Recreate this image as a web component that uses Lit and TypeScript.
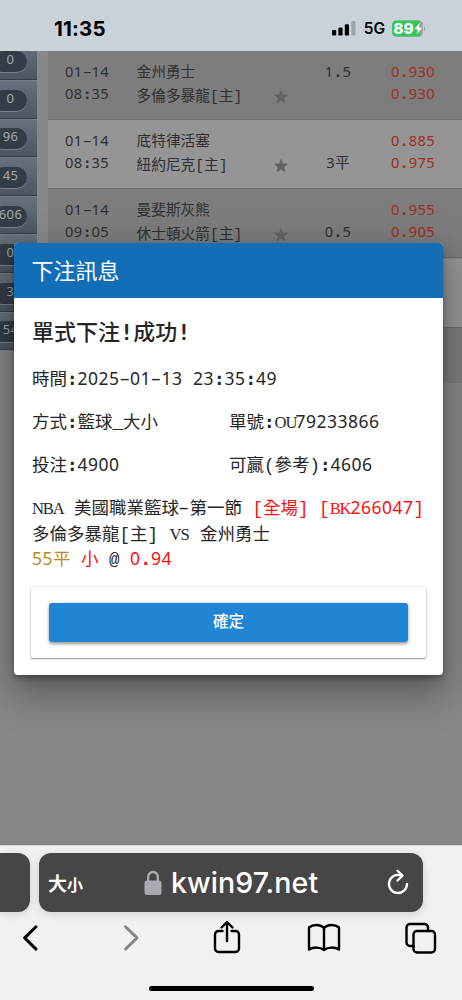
import { LitElement, html, svg, css } from "lit";
import { customElement, property } from "lit/decorators.js";

/** Sets a string on a fixed 0.6em grid, with a suitable face for each kind of character. */
const mono = (text: string) =>
  (text.match(/[0-9]+|[A-Z]+|[:.!]+|-|[^0-9A-Z:.!\-]+/g) ?? []).map((run) => {
    if (/[0-9]/.test(run)) return html`<span class="d">${run}</span>`;
    if (/[A-Z]/.test(run)) return html`<span class="c" style="width:${run.length * 0.6}em"><span>${run}</span></span>`;
    if (run === "-") return html`<span class="h">-</span>`;
    if (/^[:.!]/.test(run)) return html`<span class="p">${run}</span>`;
    return run;
  });

const gridText = css`
  .m { font-family: "Liberation Mono", "Noto Sans CJK TC", monospace; white-space: pre; }
  .d { font-family: "Noto Sans", sans-serif; letter-spacing: 0.028em; line-height: 1; }
  .p { font-family: "DejaVu Sans Mono", monospace; font-weight: 700; line-height: 1; }
  .h { font-family: "Noto Sans", sans-serif; display: inline-block; width: 0.322em; margin: 0 0.139em; transform: scaleX(1.85); line-height: 1; }
  .c { display: inline-block; text-align: center; line-height: 1; }
  .c span { font-family: "Liberation Serif", serif; font-size: 0.95em; letter-spacing: -0.07em; }
`;

@customElement("status-bar")
class StatusBar extends LitElement {
  static styles = css`
    :host { display: flex; height: 51px; box-sizing: border-box; background: #cad1d9; color: #000;
      font-family: Inter, sans-serif; align-items: center; padding: 5px 36px 0 54px; }
    .time { font-size: 20.5px; font-weight: 700; flex: 1; letter-spacing: 0.2px; }
    .sig { margin-right: 8px; }
    .net { font-size: 15.5px; font-weight: 600; margin-right: 7px; }
    svg { display: block; }
    text { font: 800 15px Inter, sans-serif; }
  `;
  render() {
    return html`
      <span class="time">11:35</span>
      <svg class="sig" width="24" height="15" viewBox="0 0 24 15">
        <rect x="0" y="9" width="4.2" height="5.5" rx="1.2" />
        <rect x="6.4" y="6.5" width="4.2" height="8" rx="1.2" />
        <rect x="12.8" y="3.2" width="4.2" height="11.3" rx="1.2" />
        <rect x="19.3" y="0" width="4.2" height="14.5" rx="1.2" fill="#9ea4ab" />
      </svg>
      <span class="net">5G</span>
      <svg width="34" height="17" viewBox="0 0 34 17">
        <rect x="0" y="0.5" width="31" height="16" rx="4.5" fill="#9ca3a9" />
        <path d="M4.500.5H28v16H4.500A4.500 4.500 0 0 1 0 12V5A4.500 4.500 0 0 1 4.500.5Z" fill="#34c759" />
        <path d="M32 6v5.200c1.600-.8 1.600-4.400 0-5.200Z" fill="#9ca3a9" />
        <text x="1.300" y="13.900" fill="#fff" textLength="20.500" lengthAdjust="spacingAndGlyphs">89</text>
        <path d="M27.800 2.500 22.500 9.300h3.300l-1 5.200 5.300-7h-3.300Z" fill="#fff" />
      </svg>`;
  }
}

@customElement("side-menu")
class SideMenu extends LitElement {
  static styles = [gridText, css`
    :host { display: block; width: 37px; height: 299px; overflow: hidden; }
    .list { margin-top: -9.6px; }
    .item { height: 38.62px; box-sizing: border-box; border-bottom: 1.5px solid #343e48; border-top: 1px solid #747d86;
      background: linear-gradient(#68717b, #4c5660); display: flex; align-items: center; justify-content: flex-end; padding: 2px 10px 0 0; }
    .pill { width: 34px; height: 21px; flex: none; border-radius: 11px; background: #323d48; box-shadow: 0 1px 0 #77818a;
      box-sizing: border-box; color: #a5a9ac; font-size: 13px; line-height: 20px; text-align: center; padding-left: 1px; }
  `];
  render() {
    return html`<div class="list">${["0", "0", "96", "45", "606", "0", "3", "54"].map(
      (n) => html`<div class="item"><div class="pill m">${mono(n)}</div></div>`
    )}</div>`;
  }
}

interface Game { date: string; time: string; away: string; home: string; top: string; bottom: string; odds: string[]; }

const games: Game[] = [
  { date: "01-14", time: "08:35", away: "金州勇士", home: "多倫多暴龍[主]", top: "1.5", bottom: "", odds: ["0.930", "0.930"] },
  { date: "01-14", time: "08:35", away: "底特律活塞", home: "紐約尼克[主]", top: "", bottom: "3平", odds: ["0.885", "0.975"] },
  { date: "01-14", time: "09:05", away: "曼斐斯灰熊", home: "休士頓火箭[主]", top: "", bottom: "0.5", odds: ["0.955", "0.905"] },
];

@customElement("game-list")
class GameList extends LitElement {
  static styles = [gridText, css`
    :host { display: block; flex: 1; }
    .row { height: 69px; box-sizing: border-box; border-bottom: 1px solid #6d6d6d; background: #7d7d7d; color: #303030;
      font-size: 14.7px; display: grid; grid-template-columns: 71.5px 136.5px 30px 70px 1fr; padding: 11px 0 0 17px; margin-bottom: 0.2px; }
    .row:nth-child(even) { background: #959595; }
    .row:last-child { height: 55px; border-bottom: 0; }
    .l { height: 22px; line-height: 22px; }
    .team .l { height: 23.5px; line-height: 23.5px; }
    .star { padding-top: 27px; }
    .star svg { display: block; }
    .mid { text-align: center; }
    .odds { color: #a12d20; padding-left: 18px; }
  `];
  render() {
    return html`${games.map((g) => html`<div class="row m"><div><div class="l">${mono(g.date)}</div><div class="l">${mono(g.time)}</div></div><div class="team"><div class="l">${mono(g.away)}</div><div class="l">${mono(g.home)}</div></div><div class="star"><svg width="16" height="15" viewBox="0 0 16 15"><path d="M8 .5 9.900 5.600l5.400.2-4.200 3.400 1.500 5.300L8 11.500l-4.600 3 1.500-5.300L.7 5.800l5.400-.2Z" fill="#636363" /></svg></div><div class="mid"><div class="l">${mono(g.top)}</div><div class="l">${mono(g.bottom)}</div></div><div class="odds">${g.odds.map((o) => html`<div class="l">${mono(o)}</div>`)}</div></div>`)}
      <div class="row"></div><div class="row"></div>`;
  }
}

@customElement("bet-dialog")
class BetDialog extends LitElement {
  @property() heading = "下注訊息";
  static styles = [gridText, css`
    :host { display: block; width: 429px; height: 432px; box-sizing: border-box; background: #fff; border-radius: 4px; overflow: hidden;
      color: #262626; box-shadow: 0 11px 15px -7px rgba(0,0,0,.2), 0 24px 38px 3px rgba(0,0,0,.14), 0 9px 36px 8px rgba(0,0,0,.16), 0 3px 5px rgba(0,0,0,.25); }
    .head { height: 55px; line-height: 61px; padding-left: 17.5px; background: #126eb6; color: #fff; font-size: 22px; box-sizing: border-box; }
    .body { padding: 20px 17px 0 18px; font-size: 17.5px; }
    .title { font-size: 22px; font-weight: 500; height: 34px; line-height: 34px; margin-bottom: 15px; }
    .line { display: grid; grid-template-columns: 197px 1fr; height: 26px; line-height: 26px; margin-bottom: 17px; }
    .one { display: block; }
    .t { height: 25.6px; line-height: 26.6px; }
    .red { color: #fb1010; }
    .gold { color: #b8891b; }
    .card { margin: 14px 0 0 -1px; height: 71px; box-sizing: border-box; padding: 16px 18px; border-radius: 2px;
      box-shadow: 0 1px 2px rgba(0,0,0,.4), 0 0 2px rgba(0,0,0,.2); }
    .btn { display: block; width: 100%; height: 39px; border: 0; border-radius: 3px; background: #2185d5; color: #fff; padding: 0 0 4px;
      font: 500 15.500px "Noto Sans CJK TC", sans-serif; box-shadow: 0 2px 3px rgba(0,0,0,.3), 0 1px 5px rgba(0,0,0,.16); }
  `];
  render() {
    return html`
      <div class="head m">${this.heading}</div>
      <div class="body m"><div class="title">${mono("單式下注!成功!")}</div><div class="line one">${mono("時間:2025-01-13 23:35:49")}</div><div class="line"><div>${mono("方式:籃球_大小")}</div><div>${mono("單號:OU79233866")}</div></div><div class="line"><div>${mono("投注:4900")}</div><div>${mono("可贏(參考):4606")}</div></div><div class="t">${mono("NBA 美國職業籃球-第一節 ")}<span class="red">${mono("[全場] [BK266047]")}</span></div><div class="t">${mono("多倫多暴龍[主] VS 金州勇士")}</div><div class="t"><span class="gold">${mono("55平")}</span> <span class="red">小</span> @ <span class="red">${mono("0.94")}</span></div><div class="card"><button class="btn">確定</button></div></div>`;
  }
}

interface Tool { name: string; width: number; shape: unknown; }

const tools: Tool[] = [
  { name: "back", width: 16, shape: svg`<path d="M13 6.700 1.700 17.900 13 29.100" stroke-width="2.900" />` },
  { name: "forward", width: 18, shape: svg`<path d="M2.500 6.700 14 17.900 2.500 29.100" stroke-width="2.900" stroke="#858585" />` },
  { name: "share", width: 28, shape: svg`<path d="M9.500 11H5.500a3.500 3.500 0 0 0-3.500 3.500v14a3.500 3.500 0 0 0 3.500 3.500h17a3.500 3.500 0 0 0 3.500-3.500v-14a3.500 3.500 0 0 0-3.500-3.500h-4M14 21V2.500M8.500 7.500 14 2l5.500 5.500" />` },
  { name: "bookmarks", width: 34, shape: svg`<path d="M17 8v22M17 8C13.500 4 6 4 2 7.500V29.500c4-2.500 11-2.800 15 .5 4-3.300 11-3 15-.5V7.500C28 4 20.500 4 17 8Z" />` },
  { name: "tabs", width: 34, shape: svg`<path d="M9.500 26H6a3.500 3.500 0 0 1-3.500-3.500V7.500A3.500 3.500 0 0 1 6 4h14.500A3.500 3.500 0 0 1 24 7.500V11" /><rect x="9.500" y="11" width="21.500" height="21.500" rx="3.500" />` },
];

@customElement("tool-row")
class ToolRow extends LitElement {
  static styles = css`
    :host { display: grid; grid-template-columns: 100px 90px 94px 97px 34px; padding: 8px 0 0 23px; height: 47px; box-sizing: border-box; }
    svg { display: block; fill: none; stroke: #000; stroke-width: 2.400; stroke-linecap: round; stroke-linejoin: round; }
  `;
  render() {
    return tools.map((t) => html`<svg width=${t.width} height="36" viewBox="0 0 ${t.width} 36" role="img">${t.shape}</svg>`);
  }
}

@customElement("browser-bar")
class BrowserBar extends LitElement {
  static styles = css`
    :host { display: block; height: 155px; box-sizing: border-box; background: #f1f1f1; border-top: 1px solid #d5d5d5; overflow: hidden; }
    svg { display: block; fill: none; stroke-width: 2; stroke-linecap: round; stroke-linejoin: round; }
    .tabs { display: flex; gap: 9px; padding-top: 7px; }
    .prev { width: 30px; height: 59px; border-radius: 0 12px 12px 0; background: #464646; box-shadow: 0 2px 8px rgba(0,0,0,.14); }
    .addr { width: 384px; height: 59px; border-radius: 12px; background: #464646; color: #fff; box-sizing: border-box; display: grid;
      grid-template-columns: 96px 1fr 37px; align-items: center; padding-left: 9px; box-shadow: 0 2px 8px rgba(0,0,0,.14); }
    .aa { font: 700 19px "Noto Sans CJK TC", sans-serif; white-space: nowrap; }
    .small { font-size: 16px; }
    .host { display: flex; align-items: center; gap: 9px; font: 550 28.500px Inter, sans-serif; letter-spacing: 0.1px; }
    .lock { fill: #aaa9b1; }
    .home { width: 165px; height: 5px; border-radius: 3px; background: #000; margin: 27px auto 0; }
  `;
  render() {
    return html`
      <div class="tabs">
        <div class="prev"></div>
        <div class="addr">
          <span class="aa">大<span class="small">小</span></span>
          <span class="host"><svg class="lock" width="18" height="26" viewBox="0 0 18 26"><path d="M4.200 11V6.800a4.800 4.800 0 0 1 9.600 0V11" fill="none" stroke="#aaa9b1" stroke-width="2.400" /><rect x=".5" y="10.500" width="17" height="14.500" rx="2.500" /></svg>kwin97.net</span>
          <svg width="24" height="28" viewBox="0 0 24 28"><path stroke="#fff" stroke-width="2.300" d="M15 6.500A9 9 0 1 0 21 14.800M11.500 1.700l5 4.900-5 4.900" /></svg>
        </div>
      </div>
      <tool-row></tool-row>
      <div class="home"></div>`;
  }
}

@customElement("app-root")
class AppRoot extends LitElement {
  static styles = css`
    :host { display: flex; flex-direction: column; width: 462px; height: 1000px; overflow: hidden; }
    .page { position: relative; height: 794px; display: flex; align-items: flex-start; gap: 11px; background: #888; overflow: hidden; }
    .dialog { position: absolute; left: 14px; top: 192px; }
  `;
  render() {
    return html`
      <status-bar></status-bar>
      <div class="page">
        <side-menu></side-menu>
        <game-list></game-list>
        <bet-dialog class="dialog"></bet-dialog>
      </div>
      <browser-bar></browser-bar>`;
  }
}
